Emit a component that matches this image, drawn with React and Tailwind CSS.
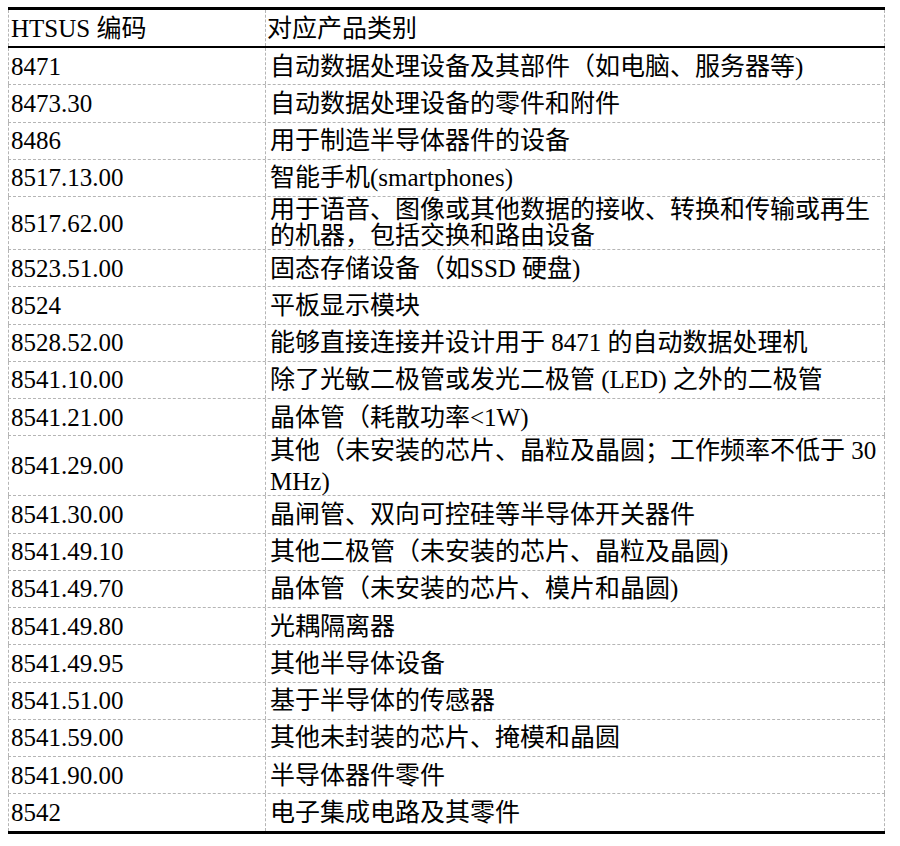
import React from "react";

const rows = [
  ["8471", "自动数据处理设备及其部件（如电脑、服务器等)"],
  ["8473.30", "自动数据处理设备的零件和附件"],
  ["8486", "用于制造半导体器件的设备"],
  ["8517.13.00", "智能手机(smartphones)"],
  ["8517.62.00", ["用于语音、图像或其他数据的接收、转换和传输或再生", "的机器，包括交换和路由设备"], "a"],
  ["8523.51.00", "固态存储设备（如SSD 硬盘)"],
  ["8524", "平板显示模块"],
  ["8528.52.00", "能够直接连接并设计用于 8471 的自动数据处理机"],
  ["8541.10.00", "除了光敏二极管或发光二极管 (LED) 之外的二极管"],
  ["8541.21.00", "晶体管（耗散功率<1W)"],
  ["8541.29.00", ["其他（未安装的芯片、晶粒及晶圆；工作频率不低于 30", "MHz)"], "b"],
  ["8541.30.00", "晶闸管、双向可控硅等半导体开关器件"],
  ["8541.49.10", "其他二极管（未安装的芯片、晶粒及晶圆)"],
  ["8541.49.70", "晶体管（未安装的芯片、模片和晶圆)"],
  ["8541.49.80", "光耦隔离器"],
  ["8541.49.95", "其他半导体设备"],
  ["8541.51.00", "基于半导体的传感器"],
  ["8541.59.00", "其他未封装的芯片、掩模和晶圆"],
  ["8541.90.00", "半导体器件零件"],
  ["8542", "电子集成电路及其零件"],
];

export default function App() {
  return (
    <div
      className="w-[900px] h-[846px] bg-white pt-[7px] pl-[8px] text-black"
      style={{ fontFamily: '"Liberation Serif", "Noto Sans CJK SC", serif' }}
    >
      <div className="w-[877px] border-t-[3px] border-b-[3px] border-black">
        <div className="grid grid-cols-[258px_1fr] border-b-2 border-black">
          <div className="h-[36px] flex items-center pl-[2px] text-[25px] leading-[27px] border-l border-r border-dashed border-[#b5b5b5]">
            HTSUS 编码
          </div>
          <div className="h-[36px] flex items-center pl-[1px] text-[25px] leading-[27px] border-r border-dashed border-[#b5b5b5]">
            对应产品类别
          </div>
        </div>
        {rows.map(([code, desc, kind], i) => {
          const multi = Array.isArray(desc);
          const last = i === rows.length - 1;
          const h =
            kind === "a" ? "h-[52px] " : kind === "b" ? "h-[59px] " : "h-[36.25px] ";
          const lead =
            kind === "a" ? "leading-[26px] " : kind === "b" ? "leading-[31px] " : "leading-[27px] ";
          return (
            <div
              key={code}
              className={
                "grid grid-cols-[258px_1fr] " +
                (last ? "" : "border-b border-dashed border-[#b5b5b5]")
              }
            >
              <div
                className={
                  h +
                  "flex items-center pl-[2px] text-[25px] leading-[27px] border-l border-r border-dashed border-[#b5b5b5]"
                }
              >
                {code}
              </div>
              <div
                className={
                  h +
                  lead +
                  "flex flex-col justify-center pl-[4px] text-[25px] border-r border-dashed border-[#b5b5b5] whitespace-nowrap"
                }
              >
                {multi ? (
                  <>
                    <span>{desc[0]}</span>
                    <span>{desc[1]}</span>
                  </>
                ) : (
                  <span>{desc}</span>
                )}
              </div>
            </div>
          );
        })}
      </div>
    </div>
  );
}
